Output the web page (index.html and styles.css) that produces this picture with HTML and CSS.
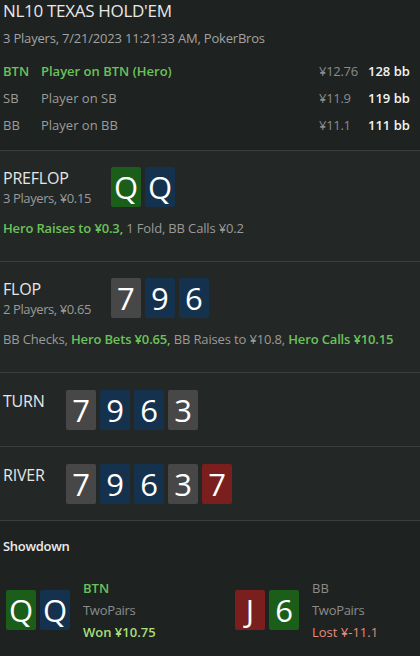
FILE: index.html
```html
<!DOCTYPE html>
<html>
<head>
<meta charset="utf-8">
<link rel="stylesheet" href="styles.css">
</head>
<body>
<div class="page">
  <header class="head">
    <div class="title">NL10 TEXAS HOLD'EM</div>
    <div class="subtitle">3 Players, 7/21/2023 11:21:33 AM, PokerBros</div>
    <div class="players">
      <div class="prow hero"><span class="pos">BTN</span><span class="name">Player on BTN (Hero)</span><span class="amt">¥12.76</span><span class="bb">128 bb</span></div>
      <div class="prow"><span class="pos">SB</span><span class="name">Player on SB</span><span class="amt">¥11.9</span><span class="bb">119 bb</span></div>
      <div class="prow"><span class="pos">BB</span><span class="name">Player on BB</span><span class="amt">¥11.1</span><span class="bb">111 bb</span></div>
    </div>
  </header>

  <section class="street">
    <div class="street-top">
      <div class="label"><div class="sname">PREFLOP</div><div class="sinfo">3 Players, ¥0.15</div></div>
      <div class="cards"><span class="card c-green">Q</span><span class="card c-blue">Q</span></div>
    </div>
    <div class="actions"><b class="hero-act">Hero Raises to ¥0.3,</b> 1 Fold, BB Calls ¥0.2</div>
  </section>

  <section class="street">
    <div class="street-top">
      <div class="label"><div class="sname">FLOP</div><div class="sinfo">2 Players, ¥0.65</div></div>
      <div class="cards"><span class="card c-gray">7</span><span class="card c-blue">9</span><span class="card c-blue">6</span></div>
    </div>
    <div class="actions">BB Checks, <b class="hero-act">Hero Bets ¥0.65,</b> BB Raises to ¥10.8, <b class="hero-act">Hero Calls ¥10.15</b></div>
  </section>

  <section class="street short">
    <div class="street-top">
      <div class="label"><div class="sname">TURN</div></div>
      <div class="cards"><span class="card c-gray">7</span><span class="card c-blue">9</span><span class="card c-blue">6</span><span class="card c-gray">3</span></div>
    </div>
  </section>

  <section class="street short">
    <div class="street-top">
      <div class="label"><div class="sname">RIVER</div></div>
      <div class="cards"><span class="card c-gray">7</span><span class="card c-blue">9</span><span class="card c-blue">6</span><span class="card c-gray">3</span><span class="card c-red">7</span></div>
    </div>
  </section>

  <section class="showdown">
    <div class="sd-title">Showdown</div>
    <div class="sd-hands">
      <div class="sd-hand left">
        <div class="cards"><span class="card c-green">Q</span><span class="card c-blue">Q</span></div>
        <div class="sd-info"><div class="sd-pos win-pos">BTN</div><div class="sd-rank">TwoPairs</div><div class="sd-res won">Won ¥10.75</div></div>
      </div>
      <div class="sd-hand">
        <div class="cards"><span class="card c-red">J</span><span class="card c-green">6</span></div>
        <div class="sd-info"><div class="sd-pos">BB</div><div class="sd-rank">TwoPairs</div><div class="sd-res lost">Lost ¥-11.1</div></div>
      </div>
    </div>
  </section>
</div>
</body>
</html>
```

FILE: styles.css
```css
* { box-sizing: border-box; }
html, body { margin: 0; padding: 0; }
body {
  background: #1e2220;
  font-family: "Open Sans", "Noto Sans", sans-serif;
  color: #e6e6e6;
  width: 420px;
  height: 656px;
  overflow: hidden;
}
.page { width: 420px; }

.head {
  padding: 0 10px 11px 3px;
  border-bottom: 1px solid #3a3f3c;
}
.title {
  font-size: 17px;
  line-height: 22px;
  color: #e8e8e8;
  letter-spacing: -0.3px;
}
.subtitle {
  font-size: 13px;
  line-height: 18px;
  margin-top: 7px;
  color: #a3a3a3;
  letter-spacing: -0.2px;
}
.players { margin-top: 11px; }
.prow {
  display: grid;
  grid-template-columns: 38px 1fr 49px auto;
  font-size: 13px;
  line-height: 27px;
  color: #9c9c9c;
  letter-spacing: 0;
}
.prow.hero .pos, .prow.hero .name { color: #6cc25a; font-weight: 600; }
.amt { color: #8c8c8c; letter-spacing: -0.3px; }
.bb { color: #f2f2f2; font-weight: 600; width: 42px; }

.street {
  background: #232826;
  border-bottom: 1px solid #3a3f3c;
  padding: 16px 10px 24px 3px;
}
.street.short { padding-bottom: 16px; }
.street-top {
  display: flex;
  align-items: flex-start;
  gap: 20px;
}
.street.short .street-top { padding-top: 1px; }
.label { min-width: 43px; }
.sname {
  font-size: 16px;
  line-height: 22px;
  color: #e6e6e6;
  letter-spacing: -0.2px;
}
.sinfo {
  font-size: 13px;
  line-height: 18px;
  color: #9a9a9a;
  letter-spacing: -0.4px;
}
.cards { display: flex; gap: 4px; }
.card {
  width: 30px;
  height: 40px;
  border-radius: 2px;
  color: #ffffff;
  font-size: 31px;
  line-height: 40px;
  text-align: center;
}
.c-green { background: #1b5e1a; }
.c-blue { background: #14324e; }
.c-gray { background: #474747; }
.c-red { background: #7a1e1e; }

.actions {
  margin-top: 12px;
  font-size: 13px;
  line-height: 18px;
  color: #9a9a9a;
  letter-spacing: -0.15px;
  white-space: nowrap;
}
.hero-act { color: #6cc25a; font-weight: 600; }

.showdown {
  padding: 16px 0 0 3px;
}
.sd-title {
  font-size: 13px;
  line-height: 18px;
  color: #ececec;
  font-weight: 600;
  letter-spacing: -0.3px;
}
.sd-hands {
  display: flex;
  margin-top: 22px;
  padding-left: 3px;
}
.sd-hand {
  display: flex;
  align-items: center;
  gap: 13px;
}
.sd-hand.left { width: 229px; }
.sd-info {
  font-size: 13px;
  line-height: 22px;
  letter-spacing: 0;
}
.sd-pos { color: #8c8c8c; }
.sd-pos.win-pos { color: #6cc25a; font-weight: 600; }
.sd-rank { color: #8c8c8c; letter-spacing: -0.3px; }
.sd-res.won { color: #a6df7a; font-weight: 600; }
.sd-res.lost { color: #e58a7f; }
```
